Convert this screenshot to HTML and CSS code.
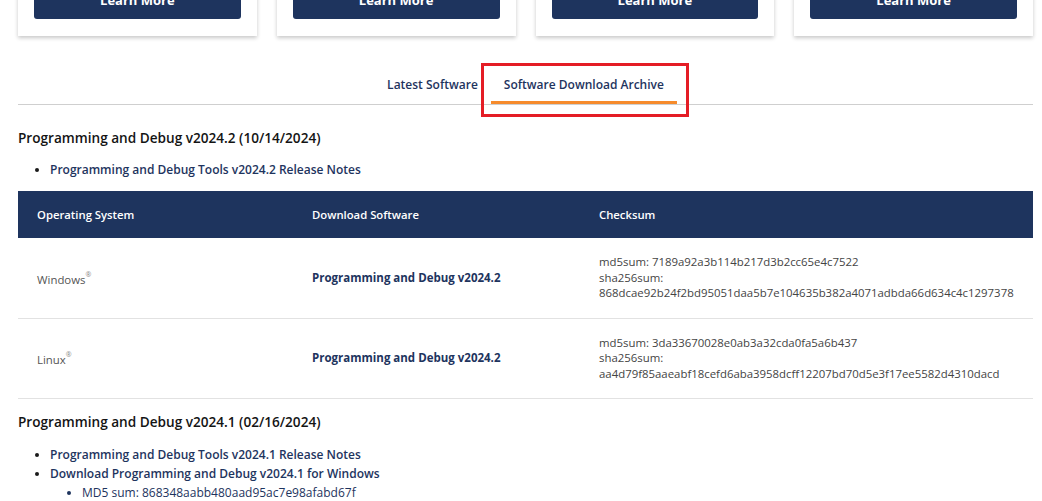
FILE: index.html
```html
<!DOCTYPE html>
<html>
<head>
<title>Programming and Debug - Software Download Archive</title>
<link rel="stylesheet" href="styles.css">
</head>
<body>
  <div class="page">
    <div class="cards">
      <div class="card"><a class="card-button" href="#">Learn More</a></div>
      <div class="card"><a class="card-button" href="#">Learn More</a></div>
      <div class="card"><a class="card-button" href="#">Learn More</a></div>
      <div class="card"><a class="card-button" href="#">Learn More</a></div>
    </div>

    <div class="tabs">
      <a class="tab" href="#">Latest Software</a>
      <a class="tab active" href="#">Software Download Archive</a>
    </div>

    <div class="release">
      <h3 class="release-title">Programming and Debug v2024.2 (10/14/2024)</h3>
      <ul class="release-links">
        <li><a href="#">Programming and Debug Tools v2024.2 Release Notes</a></li>
      </ul>
      <table class="downloads">
        <thead>
          <tr>
            <th class="col-os">Operating System</th>
            <th class="col-sw">Download Software</th>
            <th>Checksum</th>
          </tr>
        </thead>
        <tbody>
          <tr>
            <td class="os">Windows<sup>®</sup></td>
            <td><a class="sw-link" href="#">Programming and Debug v2024.2</a></td>
            <td class="sum">md5sum: 7189a92a3b114b217d3b2cc65e4c7522<br>sha256sum:<br>868dcae92b24f2bd95051daa5b7e104635b382a4071adbda66d634c4c1297378</td>
          </tr>
          <tr>
            <td class="os">Linux<sup>®</sup></td>
            <td><a class="sw-link" href="#">Programming and Debug v2024.2</a></td>
            <td class="sum">md5sum: 3da33670028e0ab3a32cda0fa5a6b437<br>sha256sum:<br>aa4d79f85aaeabf18cefd6aba3958dcff12207bd70d5e3f17ee5582d4310dacd</td>
          </tr>
        </tbody>
      </table>
    </div>

    <div class="release release-old">
      <h3 class="release-title">Programming and Debug v2024.1 (02/16/2024)</h3>
      <ul class="release-links">
        <li><a href="#">Programming and Debug Tools v2024.1 Release Notes</a></li>
        <li>
          <a href="#">Download Programming and Debug v2024.1 for Windows</a>
          <ul class="sums">
            <li>MD5 sum: 868348aabb480aad95ac7e98afabd67f</li>
          </ul>
        </li>
      </ul>
    </div>
  </div>
</body>
</html>
```

FILE: styles.css
```css
body {
  margin: 0;
  background: #fff;
  font-family: "Open Sans", "Noto Sans", sans-serif;
  color: #1a1a1a;
  overflow: hidden;
}

a {
  text-decoration: none;
}

.page {
  padding: 0 9px 0 18px;
}

/* cards (scrolled partly out of view) */
.cards {
  display: grid;
  grid-template-columns: repeat(4, 1fr);
  gap: 20px;
  margin-top: -35px;
}

.card {
  background: #fff;
  padding: 16px 16px 17px;
  box-shadow: 0 2px 4px rgba(0, 0, 0, 0.22);
}

.card-button {
  display: block;
  background: #1e345e;
  color: #fff;
  font-weight: 700;
  font-size: 13px;
  text-align: center;
  line-height: 38px;
  border-radius: 3px;
}

/* tabs */
.tabs {
  display: flex;
  justify-content: center;
  border-bottom: 1px solid #cfcfcf;
  margin-top: 32px;
}

.tab {
  position: relative;
  color: #1e345e;
  font-size: 12px;
  font-weight: 600;
  line-height: 18px;
  padding: 8px 13px 7px;
  border-bottom: 3px solid transparent;
}

.tab.active {
  border-bottom-color: #f68b2c;
}

.tab.active::after {
  content: '';
  position: absolute;
  top: -5px;
  left: -10px;
  right: -12px;
  bottom: -16px;
  border: 3px solid #e41d25;
}

/* releases */
.release-title {
  margin: 23px 0 0;
  font-size: 13.6px;
  font-weight: 600;
  line-height: 20px;
  color: #141414;
}

.release-links {
  margin: 12px 0 0;
  padding-left: 32px;
  font-size: 12px;
  line-height: 19px;
  list-style: disc;
}

.release-links a {
  color: #1e345e;
  font-weight: 600;
}

.sums {
  margin: 0;
  padding-left: 32px;
  color: #1e345e;
  font-size: 12px;
  list-style: disc;
}

.downloads {
  width: 100%;
  margin-top: 12px;
  border-collapse: collapse;
}

.downloads th {
  background: #1e345e;
  color: #fff;
  font-size: 11.3px;
  font-weight: 600;
  text-align: left;
  height: 47px;
  padding: 0 19px;
}

.col-os {
  width: 237px;
}

.col-sw {
  width: 249px;
}

.downloads td {
  padding: 16px 19px 17px;
  border-bottom: 1px solid #e2e2e2;
  vertical-align: middle;
  font-size: 11.4px;
  line-height: 15.5px;
}

.os {
  color: #555;
  padding-top: 20px !important;
}

.os sup {
  font-size: 7px;
  color: #888;
  vertical-align: 7px;
  line-height: 0;
}

.sw-link {
  color: #1e345e;
  font-weight: 700;
  font-size: 11.5px;
}

.sum {
  color: #444;
}

.release-old .release-title {
  margin-top: 13px;
}

.release-old .release-links {
  margin-top: 13px;
}
```
